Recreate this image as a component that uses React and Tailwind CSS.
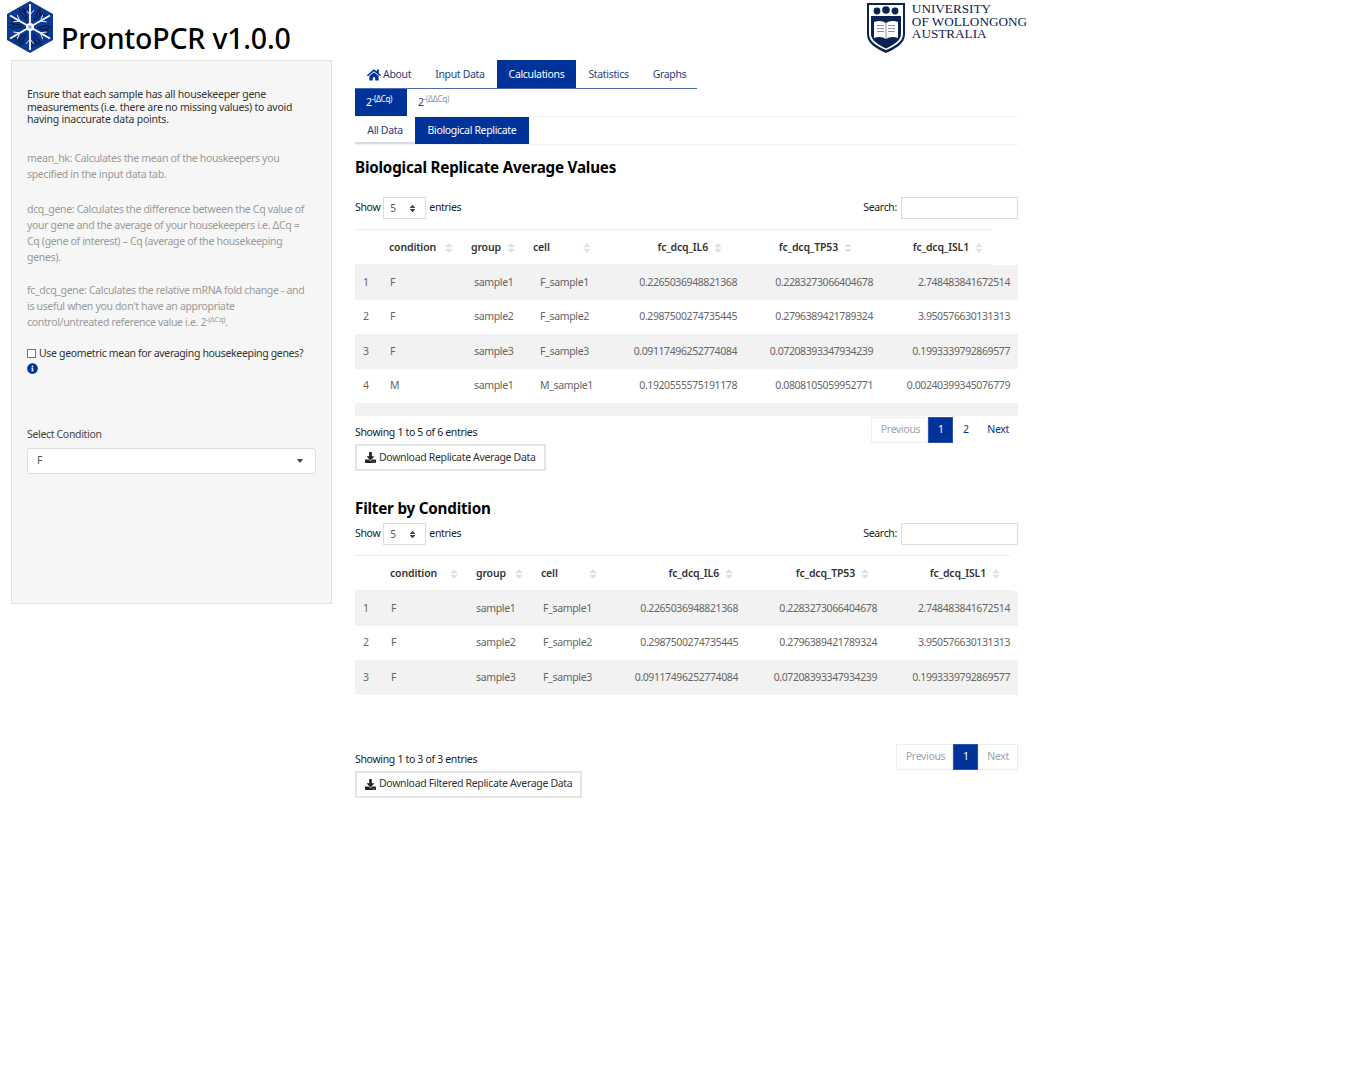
import { FaHome, FaDownload, FaInfoCircle, FaSort } from "react-icons/fa";

const font = { fontFamily: '"Noto Sans", sans-serif' };

const rowsA = [
  ["1", "F", "sample1", "F_sample1", "0.2265036948821368", "0.2283273066404678", "2.748483841672514"],
  ["2", "F", "sample2", "F_sample2", "0.2987500274735445", "0.2796389421789324", "3.950576630131313"],
  ["3", "F", "sample3", "F_sample3", "0.09117496252774084", "0.07208393347934239", "0.1993339792869577"],
  ["4", "M", "sample1", "M_sample1", "0.1920555575191178", "0.0808105059952771", "0.00240399345076779"],
];

function NeuronLogo() {
  const arms = [0, 60, 120, 180, 240, 300];
  return (
    <svg width="48" height="53" viewBox="0 0 48 53" className="shrink-0">
      <polygon points="24,0 47,13 47,39 24,52 1,39 1,13" fill="#0b3a94" />
      {arms.map((a) => (
        <g key={a} transform={`rotate(${a} 24 26)`}>
          <path d="M30 19 L37 11 M34 14 L34 7 M34 14 L41 15 M28 20 L32 9" stroke="#0a1330" strokeWidth="1" fill="none" />
          <path d="M24 26 L24 3" stroke="#ffffff" strokeWidth="1.8" />
          <path d="M24 14 L20 9 M24 14 L28 9" stroke="#e8eefc" strokeWidth="0.9" />
        </g>
      ))}
      <circle cx="24" cy="26" r="4" fill="#ffffff" />
      <circle cx="24" cy="26" r="1.7" fill="#7f9ce0" />
    </svg>
  );
}

function UowCrest() {
  return (
    <svg width="40" height="53" viewBox="0 0 40 53" className="shrink-0">
      <path d="M1 2 H39 V33 C39 43 29 48 20 52 C11 48 1 43 1 33 Z" fill="#0b2350" />
      <path d="M3 4 H37 V33 C37 41 28 45.5 20 49 C12 45.5 3 41 3 33 Z" fill="#ffffff" />
      <path d="M5 15 H35 V33 C35 40 27 44 20 47.5 C13 44 5 40 5 33 Z" fill="#0b2350" />
      <circle cx="11" cy="10" r="3.4" fill="#0b2350" />
      <circle cx="20" cy="9" r="3.8" fill="#0b2350" />
      <circle cx="29" cy="10" r="3.4" fill="#0b2350" />
      <path d="M8 21 C13 19 17 20 20 22 C23 20 27 19 32 21 V37 C27 35 23 36 20 38 C17 36 13 35 8 37 Z" fill="#ffffff" />
      <path d="M20 22 V38 M11 24.5 H18 M11 27.5 H18 M11 30.5 H18 M22 24.5 H29 M22 27.5 H29 M22 30.5 H29" stroke="#6b7893" strokeWidth="0.8" />
    </svg>
  );
}

function SortMark() {
  return <FaSort className="text-[#dfe1e5] text-[12px] shrink-0" />;
}

function Head({ cols, lineW, labels }) {
  return (
    <div className={`${lineW} border-t border-b border-[#eeeeee] h-[36px] pt-[2px] items-center grid ${cols} text-[#333] font-semibold tracking-[-0.15px]`}>
      <div />
      {labels.map((l, i) => (
        <div key={l} className={`flex items-center px-2 ${i < 3 ? "justify-between" : "justify-end gap-[4px]"}`}>
          <span>{l}</span>
          <SortMark />
        </div>
      ))}
    </div>
  );
}

function Body({ cols, rows, extra }) {
  return (
    <div className="text-[#666]">
      {rows.map((r, idx) => (
        <div key={r[0]} className={`grid ${cols} items-center h-[34.5px] pt-px ${idx % 2 === 0 ? "bg-[#f2f2f2]" : "bg-white"}`}>
          {r.map((c, i) => (
            <div key={i} className={`px-2 whitespace-nowrap ${i > 3 ? "text-right tracking-[-0.4px]" : ""}`}>
              {c}
            </div>
          ))}
        </div>
      ))}
      {extra}
    </div>
  );
}

function Pager({ pages, nextDim }) {
  return (
    <div className="flex h-[27px] pt-px">
      <span className="border border-[#eeeeee] pl-[9px] pr-[7px] flex items-center text-[#9aa3b5]">Previous</span>
      {pages.map((p, i) => (
        <span key={p} className={`flex items-center min-w-[25px] justify-center ${i === 0 ? "bg-[#003399] text-white border border-[#2a56b0]" : "text-[#003399]"}`}>
          {p}
        </span>
      ))}
      <span className={`flex items-center ${nextDim ? "px-[8px] border border-[#eeeeee] text-[#9aa3b5]" : "px-[9px] text-[#003399]"}`}>Next</span>
    </div>
  );
}

function Controls() {
  return (
    <div className="flex justify-between items-center h-[22px] text-[#222]">
      <div className="flex items-center">
        <span>Show</span>
        <span className="mx-[3px] w-[43px] h-[22px] border border-[#dddddd] flex items-center justify-between pl-[6px] pr-[8px] text-[#555] text-[10px]">
          5<FaSort className="text-[#444] text-[9px]" />
        </span>
        <span>entries</span>
      </div>
      <div className="flex items-center">
        <span className="mr-[4px]">Search:</span>
        <span className="w-[117px] h-[22px] border border-[#dddddd] block" />
      </div>
    </div>
  );
}

function DownloadBtn({ children }) {
  return (
    <button className="h-[27px] border-2 border-[#e4e4e4] px-[8px] flex items-center gap-[3px] text-[#333] bg-white">
      <FaDownload className="text-[11px] text-[#222]" />
      {children}
    </button>
  );
}

export default function App() {
  const colsA = "grid-cols-[27px_84px_66px_68px_145px_136px_137px]";
  const headA = "grid-cols-[26px_82px_62px_76px_131px_130px_131px]";
  const colsB = "grid-cols-[28px_85px_67px_65px_146px_139px_133px]";
  const headB = "grid-cols-[27px_86px_65px_74px_136px_136px_131px]";
  const labels = ["condition", "group", "cell", "fc_dcq_IL6", "fc_dcq_TP53", "fc_dcq_ISL1"];

  return (
    <div style={font} className="w-[1372px] h-[1083px] bg-white text-[10.5px] tracking-[-0.33px] overflow-hidden relative">
      <div className="w-[1027px] h-[60px] flex justify-between">
        <div className="flex pl-[6px] pt-[1px]">
          <NeuronLogo />
          <h1 className="ml-[7px] mt-[18px] text-[28.5px] leading-[38px] text-black font-medium tracking-[-0.2px] whitespace-nowrap">ProntoPCR v1.0.0</h1>
        </div>
        <div className="flex gap-[6px] pt-[1px]">
          <UowCrest />
          <div className="text-[#0b2350] text-[13.2px] leading-[12.5px] pt-[2px] tracking-[0px] whitespace-nowrap" style={{ fontFamily: '"Liberation Serif", serif' }}>
            UNIVERSITY
            <br />
            OF WOLLONGONG
            <br />
            AUSTRALIA
          </div>
        </div>
      </div>

      <div className="flex items-start pl-[11px]">
        <aside className="w-[321px] h-[544px] bg-[#f6f6f6] border border-[#e3e3e3] px-[15px] pt-[27px] shrink-0">
          <p className="text-[#333] leading-[12.6px] tracking-[-0.23px]">
            Ensure that each sample has all housekeeper gene measurements (i.e. there are no missing values) to avoid having inaccurate data points.
          </p>
          <p className="mt-[24px] text-[#9a9a9a] leading-[16px]">mean_hk: Calculates the mean of the houskeepers you specified in the input data tab.</p>
          <p className="mt-[19px] text-[#9a9a9a] leading-[16px]">
            dcq_gene: Calculates the difference between the Cq value of
            <br />
            your gene and the average of your housekeepers i.e. ΔCq =
            <br />
            Cq (gene of interest) – Cq (average of the housekeeping
            <br />
            genes).
          </p>
          <p className="mt-[17px] text-[#9a9a9a] leading-[16px]">
            fc_dcq_gene: Calculates the relative mRNA fold change - and
            <br />
            is useful when you don't have an appropriate
            <br />
            control/untreated reference value i.e. 2
            <sup className="text-[7.5px] leading-none">-(ΔCq)</sup>.
          </p>
          <div className="mt-[16px] flex items-center h-[16px] text-[#333]">
            <span className="w-[9px] h-[9px] border border-[#777] bg-white mr-[3px] block shrink-0" />
            <span className="whitespace-nowrap">Use geometric mean for averaging housekeeping genes?</span>
          </div>
          <FaInfoCircle className="text-[#003399] text-[11px] mt-[1px]" />
          <div className="mt-[53px] text-[#444]">Select Condition</div>
          <div className="mt-[5px] h-[26px] w-[289px] bg-white border border-[#dddddd] rounded-[3px] flex items-center justify-between pl-[9px] pr-[12px] text-[#555]">
            F
            <span className="w-0 h-0 border-x-[3.5px] border-x-transparent border-t-[4px] border-t-[#444]" />
          </div>
        </aside>

        <main className="ml-[23px] w-[663px]">
          <nav className="w-[342px] h-[29px] flex border-b border-[#4a6cb3] text-[#1f3f80]">
            <span className="px-[12px] pt-px flex items-center gap-[2px] whitespace-nowrap">
              <FaHome className="text-[#003399] text-[14px]" />
              About
            </span>
            <span className="px-[12px] pt-px flex items-center whitespace-nowrap">Input Data</span>
            <span className="px-[12px] pt-px flex items-center bg-[#003399] text-white">Calculations</span>
            <span className="px-[12px] pt-px flex items-center">Statistics</span>
            <span className="px-[12px] pt-px flex items-center">Graphs</span>
          </nav>
          <div className="h-[28px] flex border-b border-[#f0f0f0] text-[#1f3f80]">
            <span className="w-[52px] pl-[11px] flex items-center bg-[#003399] text-white">
              2<sup className="text-[8px] leading-none">-(ΔCq)</sup>
            </span>
            <span className="w-[56px] pl-[11px] flex items-center">
              2<sup className="text-[8px] leading-none text-[#8a97b8]">-(ΔΔCq)</sup>
            </span>
          </div>
          <div className="h-[28px] flex border-b border-[#f0f0f0] text-[#1f3f80]">
            <span className="w-[60px] pt-[2px] flex items-center justify-center border-b-2 border-[#d5dbe8]">All Data</span>
            <span className="w-[114px] pt-px flex items-center justify-center bg-[#003399] text-white">Biological Replicate</span>
          </div>

          <h3 className="mt-[12px] text-[15.2px] leading-[20px] font-bold text-black tracking-[-0.2px]">Biological Replicate Average Values</h3>
          <div className="mt-[20px]">
            <Controls />
          </div>
          <div className="mt-[10px]">
            <Head cols={headA} lineW="w-[637px]" labels={labels} />
            <Body cols={colsA} rows={rowsA} extra={<div className="h-[13px] bg-[#f2f2f2]" />} />
          </div>
          <div className="flex justify-between items-start">
            <div className="flex flex-col">
              <span className="mt-[8px] leading-[16px] text-[#222]">Showing 1 to 5 of 6 entries</span>
              <div className="mt-[4px]">
                <DownloadBtn>Download Replicate Average Data</DownloadBtn>
              </div>
            </div>
            <Pager pages={["1", "2"]} />
          </div>

          <h3 className="mt-[27px] text-[15.2px] leading-[20px] font-bold text-black tracking-[-0.2px]">Filter by Condition</h3>
          <div className="mt-[5px]">
            <Controls />
          </div>
          <div className="mt-[10px]">
            <Head cols={headB} lineW="w-[655px]" labels={labels} />
            <Body cols={colsB} rows={rowsA.slice(0, 3)} />
          </div>
          <div className="flex justify-between items-start mt-[48px]">
            <div className="flex flex-col">
              <span className="mt-[8px] leading-[16px] text-[#222]">Showing 1 to 3 of 3 entries</span>
              <div className="mt-[4px]">
                <DownloadBtn>Download Filtered Replicate Average Data</DownloadBtn>
              </div>
            </div>
            <Pager pages={["1"]} nextDim />
          </div>
        </main>
      </div>
    </div>
  );
}
